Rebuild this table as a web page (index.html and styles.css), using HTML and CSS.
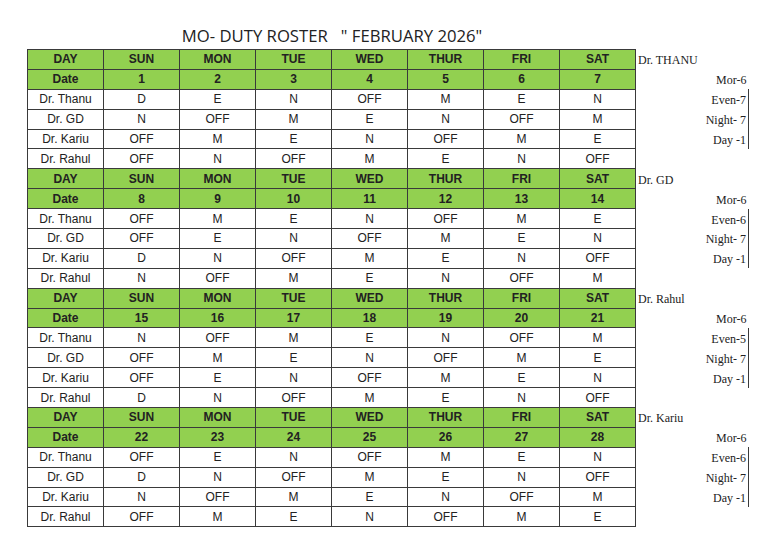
FILE: index.html
```html
<!DOCTYPE html>
<html>
<head>
<meta charset="utf-8">
<link rel="stylesheet" href="styles.css">
</head>
<body>
<div class="page">
  <h1 class="title">MO- DUTY ROSTER &nbsp;&nbsp;" FEBRUARY 2026"</h1>
  <table class="roster">
    <colgroup>
      <col class="c"><col class="c"><col class="c"><col class="c"><col class="c"><col class="c"><col class="c"><col class="c"><col class="side-col">
    </colgroup>
    <tbody>
      <tr class="hd"><td>DAY</td><td>SUN</td><td>MON</td><td>TUE</td><td>WED</td><td>THUR</td><td>FRI</td><td>SAT</td><td class="side name">Dr. THANU</td></tr>
      <tr class="hd"><td>Date</td><td>1</td><td>2</td><td>3</td><td>4</td><td>5</td><td>6</td><td>7</td><td class="side stat">Mor-6</td></tr>
      <tr><td>Dr. Thanu</td><td>D</td><td>E</td><td>N</td><td>OFF</td><td>M</td><td>E</td><td>N</td><td class="side stat bar">Even-7</td></tr>
      <tr><td>Dr. GD</td><td>N</td><td>OFF</td><td>M</td><td>E</td><td>N</td><td>OFF</td><td>M</td><td class="side stat bar">Night- 7</td></tr>
      <tr><td>Dr. Kariu</td><td>OFF</td><td>M</td><td>E</td><td>N</td><td>OFF</td><td>M</td><td>E</td><td class="side stat bar">Day -1</td></tr>
      <tr><td>Dr. Rahul</td><td>OFF</td><td>N</td><td>OFF</td><td>M</td><td>E</td><td>N</td><td>OFF</td><td class="side"></td></tr>

      <tr class="hd"><td>DAY</td><td>SUN</td><td>MON</td><td>TUE</td><td>WED</td><td>THUR</td><td>FRI</td><td>SAT</td><td class="side name">Dr. GD</td></tr>
      <tr class="hd"><td>Date</td><td>8</td><td>9</td><td>10</td><td>11</td><td>12</td><td>13</td><td>14</td><td class="side stat">Mor-6</td></tr>
      <tr><td>Dr. Thanu</td><td>OFF</td><td>M</td><td>E</td><td>N</td><td>OFF</td><td>M</td><td>E</td><td class="side stat bar">Even-6</td></tr>
      <tr><td>Dr. GD</td><td>OFF</td><td>E</td><td>N</td><td>OFF</td><td>M</td><td>E</td><td>N</td><td class="side stat bar">Night- 7</td></tr>
      <tr><td>Dr. Kariu</td><td>D</td><td>N</td><td>OFF</td><td>M</td><td>E</td><td>N</td><td>OFF</td><td class="side stat bar">Day -1</td></tr>
      <tr><td>Dr. Rahul</td><td>N</td><td>OFF</td><td>M</td><td>E</td><td>N</td><td>OFF</td><td>M</td><td class="side"></td></tr>

      <tr class="hd"><td>DAY</td><td>SUN</td><td>MON</td><td>TUE</td><td>WED</td><td>THUR</td><td>FRI</td><td>SAT</td><td class="side name">Dr. Rahul</td></tr>
      <tr class="hd"><td>Date</td><td>15</td><td>16</td><td>17</td><td>18</td><td>19</td><td>20</td><td>21</td><td class="side stat">Mor-6</td></tr>
      <tr><td>Dr. Thanu</td><td>N</td><td>OFF</td><td>M</td><td>E</td><td>N</td><td>OFF</td><td>M</td><td class="side stat bar">Even-5</td></tr>
      <tr><td>Dr. GD</td><td>OFF</td><td>M</td><td>E</td><td>N</td><td>OFF</td><td>M</td><td>E</td><td class="side stat bar">Night- 7</td></tr>
      <tr><td>Dr. Kariu</td><td>OFF</td><td>E</td><td>N</td><td>OFF</td><td>M</td><td>E</td><td>N</td><td class="side stat bar">Day -1</td></tr>
      <tr><td>Dr. Rahul</td><td>D</td><td>N</td><td>OFF</td><td>M</td><td>E</td><td>N</td><td>OFF</td><td class="side"></td></tr>

      <tr class="hd"><td>DAY</td><td>SUN</td><td>MON</td><td>TUE</td><td>WED</td><td>THUR</td><td>FRI</td><td>SAT</td><td class="side name">Dr. Kariu</td></tr>
      <tr class="hd"><td>Date</td><td>22</td><td>23</td><td>24</td><td>25</td><td>26</td><td>27</td><td>28</td><td class="side stat">Mor-6</td></tr>
      <tr><td>Dr. Thanu</td><td>OFF</td><td>E</td><td>N</td><td>OFF</td><td>M</td><td>E</td><td>N</td><td class="side stat bar">Even-6</td></tr>
      <tr><td>Dr. GD</td><td>D</td><td>N</td><td>OFF</td><td>M</td><td>E</td><td>N</td><td>OFF</td><td class="side stat bar">Night- 7</td></tr>
      <tr><td>Dr. Kariu</td><td>N</td><td>OFF</td><td>M</td><td>E</td><td>N</td><td>OFF</td><td>M</td><td class="side stat bar">Day -1</td></tr>
      <tr><td>Dr. Rahul</td><td>OFF</td><td>M</td><td>E</td><td>N</td><td>OFF</td><td>M</td><td>E</td><td class="side"></td></tr>
    </tbody>
  </table>
</div>
</body>
</html>
```
FILE: styles.css
```css
html, body {
  margin: 0;
  padding: 0;
  background: #ffffff;
}

.page {
  padding: 27px 0 0 27px;
  width: 722px;
}

.title {
  margin: 0 0 4px 0;
  width: 610px;
  text-align: center;
  font-family: "Open Sans", "Liberation Sans", sans-serif;
  font-weight: 400;
  font-size: 16.7px;
  line-height: 18px;
  color: #222;
  letter-spacing: 0;
}

.roster {
  border-collapse: collapse;
  table-layout: fixed;
  font-family: "Liberation Sans", Arial, sans-serif;
  font-size: 12px;
  color: #222;
}

.roster col.c {
  width: 76px;
}

.roster col.side-col {
  width: 113px;
}

.roster td {
  height: 19.9px;
  padding: 0;
  border: 1px solid #3a3a3a;
  text-align: center;
  vertical-align: middle;
  line-height: 14px;
  white-space: nowrap;
  box-sizing: border-box;
}

.roster tr.hd td {
  background: #92d050;
  font-weight: 700;
}

.roster tr.hd td.side,
.roster td.side {
  background: #ffffff;
  border: none;
  border-left: 1px solid #3a3a3a;
  font-family: "Liberation Serif", "Times New Roman", serif;
  font-weight: 400;
  font-size: 12px;
  color: #222;
  padding-top: 2px;
}

.roster td.name {
  text-align: left;
  padding-left: 2px;
  font-size: 12.6px;
}

.roster td.stat {
  text-align: right;
  padding-right: 2px;
}

.roster td.bar {
  border-right: 1px solid #3a3a3a;
}
```
